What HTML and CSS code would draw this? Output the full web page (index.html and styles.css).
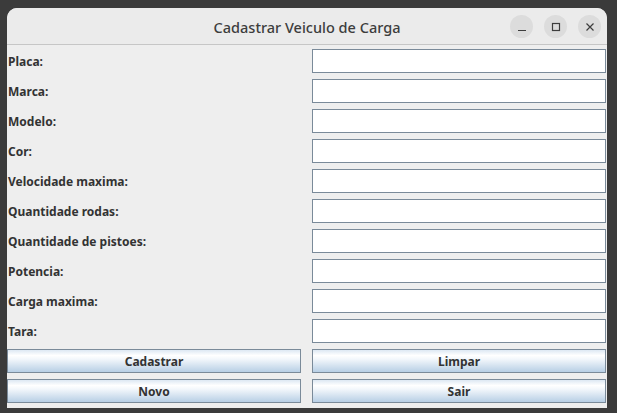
FILE: index.html
```html
<!DOCTYPE html>
<html>
<head>
<meta charset="utf-8">
<link rel="stylesheet" href="styles.css">
</head>
<body>
<div class="window">
  <div class="titlebar">
    <div class="title">Cadastrar Veiculo de Carga</div>
    <div class="controls">
      <div class="ctl"><svg width="10" height="10" viewBox="0 0 10 10"><path d="M1 8.5h8" stroke="#3d3d3d" stroke-width="1.2"/></svg></div>
      <div class="ctl"><svg width="10" height="10" viewBox="0 0 10 10"><rect x="1.5" y="1.5" width="7" height="7" fill="none" stroke="#3d3d3d" stroke-width="1.2"/></svg></div>
      <div class="ctl"><svg width="10" height="10" viewBox="0 0 10 10"><path d="M1.5 1.5l7 7M8.5 1.5l-7 7" stroke="#3d3d3d" stroke-width="1.2"/></svg></div>
    </div>
  </div>
  <div class="form">
    <label class="lbl">Placa:</label><div class="field"></div>
    <label class="lbl">Marca:</label><div class="field"></div>
    <label class="lbl">Modelo:</label><div class="field"></div>
    <label class="lbl">Cor:</label><div class="field"></div>
    <label class="lbl">Velocidade maxima:</label><div class="field"></div>
    <label class="lbl">Quantidade rodas:</label><div class="field"></div>
    <label class="lbl">Quantidade de pistoes:</label><div class="field"></div>
    <label class="lbl">Potencia:</label><div class="field"></div>
    <label class="lbl">Carga maxima:</label><div class="field"></div>
    <label class="lbl">Tara:</label><div class="field"></div>
    <button class="btn">Cadastrar</button><button class="btn">Limpar</button>
    <button class="btn">Novo</button><button class="btn">Sair</button>
  </div>
</div>
</body>
</html>
```

FILE: styles.css
```css
html, body {
  margin: 0;
  padding: 0;
  background: #3b3b3b;
  width: 617px;
  height: 413px;
  overflow: hidden;
}
.window {
  margin: 8px 0 0 7px;
  width: 600px;
  height: 400px;
  background: #eeeeee;
  border-radius: 10px 10px 0 0;
  overflow: hidden;
}
.titlebar {
  height: 36px;
  border-bottom: 1px solid #c6c6c6;
  background: #ebebeb;
  display: flex;
  align-items: center;
  justify-content: center;
  position: relative;
}
.title {
  font-family: "Noto Sans", "Open Sans", sans-serif;
  font-size: 14.5px;
  font-weight: 500;
  color: #3d3d3d;
  padding-top: 1px;
}
.controls {
  position: absolute;
  right: 6px;
  top: 7px;
  display: flex;
  gap: 11px;
}
.ctl {
  width: 23px;
  height: 23px;
  border-radius: 50%;
  background: #dcdcdc;
  display: flex;
  align-items: center;
  justify-content: center;
}
.form {
  padding-top: 4px;
  display: grid;
  grid-template-columns: 294px 294px;
  column-gap: 11px;
  grid-auto-rows: 24px;
  row-gap: 6px;
}
.lbl {
  font-family: "Noto Sans", sans-serif;
  font-weight: bold;
  font-size: 12px;
  color: #333333;
  display: flex;
  align-items: center;
  padding-left: 1px;
}
.field {
  background: #ffffff;
  border: 1px solid #7a8a99;
  box-sizing: border-box;
}
.btn {
  margin: 0;
  padding: 0;
  box-sizing: border-box;
  border: 1px solid #7a8a99;
  background: linear-gradient(to bottom, #dde8f3 0%, #ffffff 25%, #f4f8fc 40%, #b8cfe5 100%);
  font-family: "Noto Sans", sans-serif;
  font-weight: bold;
  font-size: 12px;
  color: #333333;
}
```
